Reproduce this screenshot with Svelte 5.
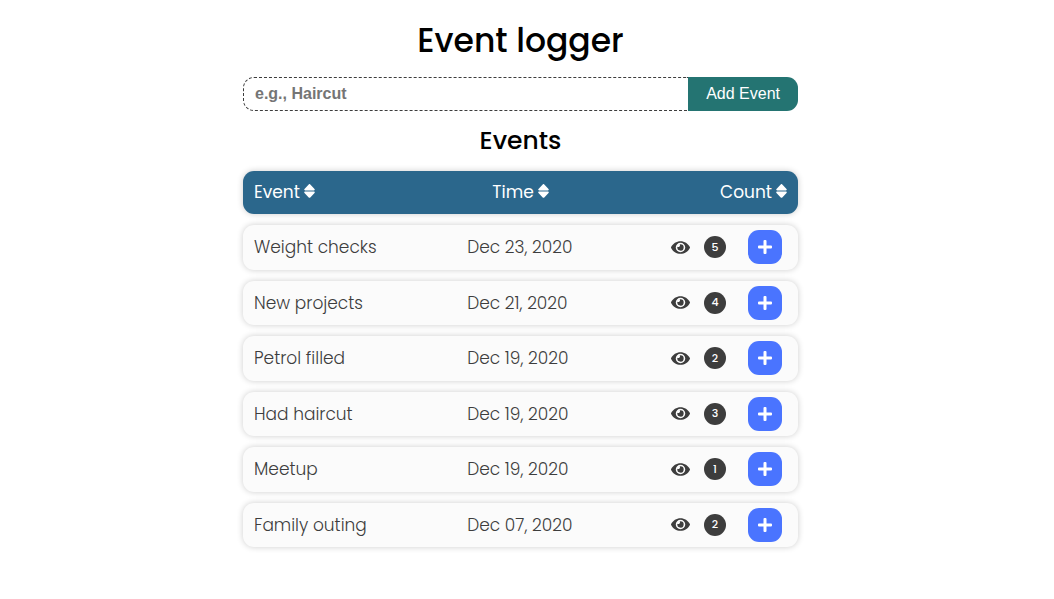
<script>
  const initial = [
    { name: 'Weight checks', date: 'Dec 23, 2020', count: 5 },
    { name: 'New projects', date: 'Dec 21, 2020', count: 4 },
    { name: 'Petrol filled', date: 'Dec 19, 2020', count: 2 },
    { name: 'Had haircut', date: 'Dec 19, 2020', count: 3 },
    { name: 'Meetup', date: 'Dec 19, 2020', count: 1 },
    { name: 'Family outing', date: 'Dec 07, 2020', count: 2 }
  ];

  const columns = [
    { label: 'Event', key: 'name' },
    { label: 'Time', key: 'date' },
    { label: 'Count', key: 'count' }
  ];

  let events = $state(initial);
  let draft = $state('');
  let sortKey = $state('');
  let ascending = $state(true);

  const valueOf = (item, key) => (key === 'date' ? Date.parse(item.date) : item[key]);

  function sortBy(key) {
    ascending = sortKey === key ? !ascending : true;
    sortKey = key;
    const direction = ascending ? 1 : -1;
    events = [...events].sort((a, b) => (valueOf(a, key) > valueOf(b, key) ? direction : -direction));
  }

  function addEvent(submit) {
    submit.preventDefault();
    const name = draft.trim();
    if (!name) return;
    const [month, day, year] = new Date()
      .toLocaleDateString('en-US', { month: 'short', day: '2-digit', year: 'numeric' })
      .replace(',', '')
      .split(' ');
    events = [{ name, date: `${month} ${day}, ${year}`, count: 1 }, ...events];
    draft = '';
  }
</script>

<main>
  <h1>Event logger</h1>

  <form onsubmit={addEvent}>
    <input type="text" placeholder="e.g., Haircut" aria-label="Event name" bind:value={draft} />
    <button class="add" type="submit">Add Event</button>
  </form>

  <h2>Events</h2>

  <table>
    <thead>
      <tr>
        {#each columns as column}
          <th scope="col">
            <button class="sort" type="button" onclick={() => sortBy(column.key)}>
              {column.label}
              <svg viewBox="0 0 11 15" width="11" height="15" aria-hidden="true">
                <path d="M1.200 6.500h8.600c.9 0 1.300-1 .7-1.600L6.300.4a1.100 1.100 0 0 0-1.600 0L.5 4.900C-.1 5.500.3 6.500 1.200 6.500zM1.200 7.500h8.600c.9 0 1.300 1 .7 1.600l-4.200 4.300a1.100 1.100 0 0 1-1.600 0L.5 9.100C-.1 8.500.3 7.500 1.200 7.500z" />
              </svg>
            </button>
          </th>
        {/each}
      </tr>
    </thead>
    <tbody>
      {#each events as item}
        <tr>
          <td>{item.name}</td>
          <td>{item.date}</td>
          <td class="actions">
            <button class="view" type="button" aria-label="View {item.name}">
              <svg viewBox="0 0 576 512" width="19" height="17" aria-hidden="true">
                <path d="M572.52 241.400C518.290 135.590 410.930 64 288 64S57.680 135.640 3.480 241.410a32.350 32.350 0 0 0 0 29.190C57.710 376.410 165.070 448 288 448s230.320-71.640 284.520-177.410a32.350 32.350 0 0 0 0-29.190zM288 400a144 144 0 1 1 144-144 143.930 143.930 0 0 1-144 144zm0-240a95.310 95.310 0 0 0-25.310 3.790 47.850 47.850 0 0 1-66.900 66.900A95.780 95.780 0 1 0 288 160z" />
              </svg>
            </button>
            <span class="count">{item.count}</span>
            <button class="plus" type="button" aria-label="Log {item.name} again">
              <svg viewBox="0 0 14 14" width="14" height="14" aria-hidden="true">
                <path d="M13 5.500H8.500V1a1 1 0 0 0-1-1h-1a1 1 0 0 0-1 1v4.500H1a1 1 0 0 0-1 1v1a1 1 0 0 0 1 1h4.500V13a1 1 0 0 0 1 1h1a1 1 0 0 0 1-1V8.500H13a1 1 0 0 0 1-1v-1a1 1 0 0 0-1-1z" />
              </svg>
            </button>
          </td>
        </tr>
      {/each}
    </tbody>
  </table>
</main>

<style>
  :global(body) {
    margin: 0;
    padding: 16px 13px 16px 0;
    background: #fff;
    color: #3d3d3d;
    font-family: Poppins, Inter, sans-serif;
    font-size: 17px;
  }

  main {
    box-sizing: border-box;
    width: 100%;
    max-width: 555px;
    margin: 0 auto;
  }

  h1,
  h2 {
    margin: 0;
    color: #000;
    font-weight: 500;
    text-align: center;
  }

  h1 {
    font-size: 33px;
    line-height: 50px;
    margin-bottom: 11px;
  }

  h2 {
    font-size: 25px;
    line-height: 38px;
    margin: 11px 0;
  }

  form {
    display: flex;
  }

  button {
    flex: none;
    margin: 0;
    padding: 0;
    border: 0;
    background: none;
    color: inherit;
    font: inherit;
    cursor: pointer;
  }

  input,
  .add {
    box-sizing: border-box;
    height: 34px;
    font-family: "Liberation Sans", Arial, sans-serif;
    font-size: 16px;
  }

  input {
    flex: 1;
    min-width: 0;
    padding: 0 11px;
    border: 1px dashed #3d3d3d;
    border-right: 0;
    border-radius: 11px 0 0 11px;
    background: #fff;
    color: #3d3d3d;
    font-weight: 700;
  }

  input::placeholder {
    color: #757575;
  }

  .add {
    padding: 0 18px;
    border-radius: 0 11px 11px 0;
    background: #247472;
    color: #fff;
  }

  table,
  tbody {
    display: grid;
    gap: 11px;
  }

  thead {
    display: block;
  }

  tbody {
    min-height: 322px;
  }

  tr {
    box-sizing: border-box;
    display: grid;
    align-items: center;
    padding: 0 11px;
    border-radius: 11px;
    box-shadow: 0 0 6px rgba(0, 0, 0, 0.2);
  }

  thead tr {
    grid-template-columns: 1fr 1fr 1fr;
    min-height: 43px;
    background: #2b678c;
    color: #fff;
  }

  tbody tr {
    grid-template-columns: 40% 1fr auto;
    background: #fbfbfb;
  }

  th,
  td {
    padding: 0;
    text-align: left;
    font-weight: 400;
  }

  td {
    font-weight: 300;
  }

  th:nth-child(2) {
    text-align: center;
  }

  th:last-child {
    text-align: right;
  }

  .sort {
    display: inline-flex;
    align-items: center;
    gap: 4px;
    line-height: 24px;
    vertical-align: top;
  }

  svg {
    display: block;
    fill: currentColor;
  }

  .actions {
    display: flex;
    align-items: center;
    justify-content: flex-end;
    padding-right: 5px;
  }

  .count {
    display: grid;
    flex: none;
    place-items: center;
    width: 22px;
    height: 22px;
    margin: 0 22px 0 14px;
    border-radius: 50%;
    background: #3d3d3d;
    color: #fff;
    font-size: 11px;
    font-weight: 500;
  }

  .plus {
    display: grid;
    place-items: center;
    width: 34px;
    height: 34px;
    border-radius: 11px;
    background: #4a74ff;
    color: #fff;
  }
</style>
